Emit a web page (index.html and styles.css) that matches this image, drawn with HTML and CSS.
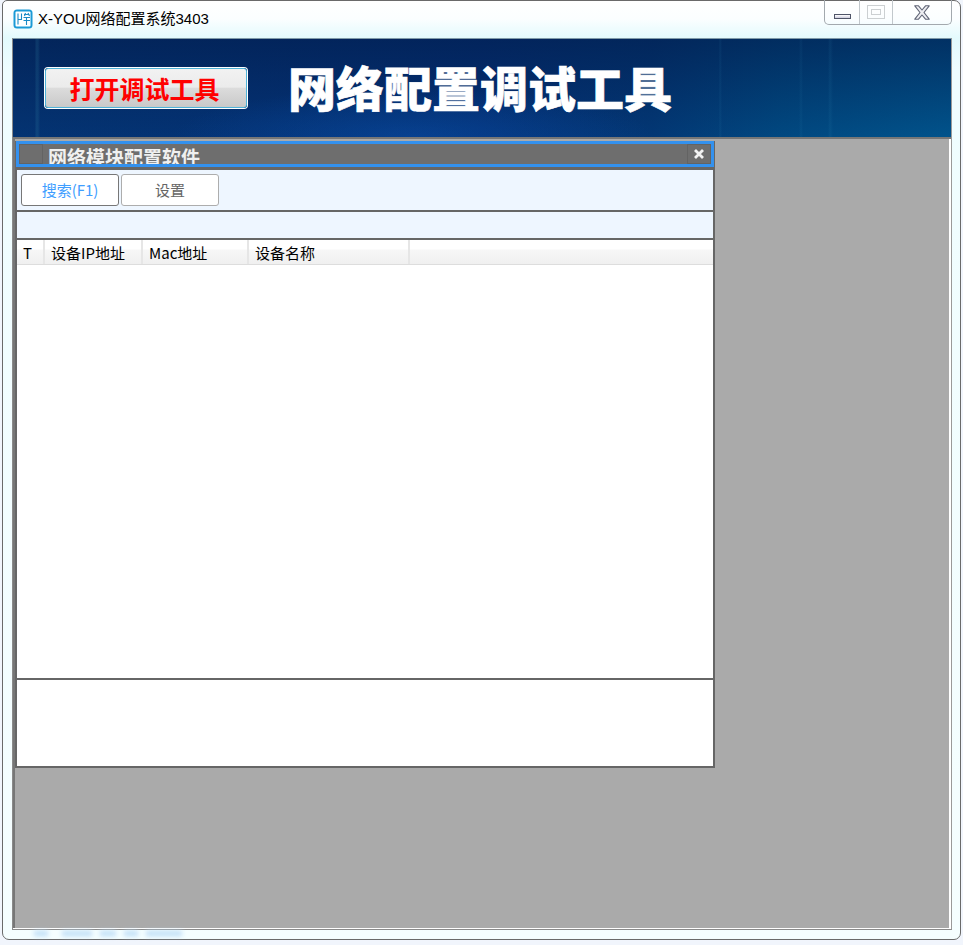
FILE: index.html
```html
<!DOCTYPE html>
<html lang="zh-CN">
<head>
<meta charset="utf-8">
<title>X-YOU网络配置系统3403</title>
<link rel="stylesheet" href="styles.css">
</head>
<body>
<div class="window">
  <div class="titlebar">
    <svg class="app-icon" width="20" height="20" viewBox="0 0 20 20">
      <rect x="0.5" y="0.5" width="19" height="19" rx="3.500" fill="#1b9ad6"/>
      <rect x="2.500" y="2.500" width="15" height="15" rx="1" fill="#fff"/>
      <path d="M5 4.500v11M8.500 4.500v6H5M11 5.500h5.500M12.500 4l-1 3M15 4l1.500 3M10.500 8.500h6.500M10.500 11.500h6.500M13.500 8.500v7.500" fill="none" stroke="#1b8ac6" stroke-width="1.100"/>
    </svg>
    <span class="title-text">X-YOU网络配置系统3403</span>
    <div class="controls">
      <div class="ctl ctl-min"><span class="min-glyph"></span></div>
      <div class="ctl ctl-max"><span class="max-glyph"><span class="max-inner"></span></span></div>
      <div class="ctl ctl-close">
        <svg width="16" height="15" viewBox="0 0 16 15"><path d="M0.800 0.800H4.500L8 5L11.500 0.800H15.200L10 7.500L15.200 14.200H11.500L8 10L4.500 14.200H0.800L6 7.500Z" fill="#eeeef2" stroke="#5f6475" stroke-width="1.100" stroke-linejoin="round"/></svg>
      </div>
    </div>
  </div>
  <div class="client">
    <div class="banner">
      <button class="open-btn">打开调试工具</button>
      <h1 class="banner-title">网络配置调试工具</h1>
    </div>
    <div class="workspace">
      <div class="panel">
        <div class="panel-title">
          <span class="panel-icon"></span>
          <span class="panel-name">网络模块配置软件</span>
          <span class="panel-close">
            <svg width="12" height="12" viewBox="0 0 12 12"><path d="M2 2L10 10M10 2L2 10" stroke="#f2f2f2" stroke-width="2.800"/></svg>
          </span>
        </div>
        <div class="toolbar">
          <button class="tool-btn tool-btn-active">搜索(F1)</button>
          <button class="tool-btn">设置</button>
        </div>
        <div class="strip"></div>
        <div class="table-head">
          <span class="col col-t">T</span>
          <span class="col col-ip">设备IP地址</span>
          <span class="col col-mac">Mac地址</span>
          <span class="col col-name">设备名称</span>
        </div>
        <div class="table-body"></div>
        <div class="log"></div>
      </div>
    </div>
  </div>
  <div class="glass-row">
    <span class="smear smear-a"></span>
    <span class="smear smear-b"></span>
    <span class="smear smear-c"></span>
    <span class="smear smear-d"></span>
    <span class="smear smear-e"></span>
  </div>
</div>
</body>
</html>
```
FILE: styles.css
```css
* { box-sizing: border-box; }
html, body { margin: 0; padding: 0; }
body {
  width: 963px;
  height: 945px;
  overflow: hidden;
  background: #f1f5fc;
  font-family: "Noto Sans CJK SC", "Noto Sans", sans-serif;
}
.window {
  width: 959px;
  height: 940px;
  margin-left: 2px;
  padding: 0 8px 0 9px;
  border: 1px solid #6a6a6a;
  border-radius: 5px 7px 7px 7px;
  background: linear-gradient(180deg, #fff 0, #fbfeff 18px, #e3fafd 37px, #effdff 70px, #f5feff 100%);
  display: flex;
  flex-direction: column;
}
.titlebar {
  height: 37px;
  flex: none;
  display: flex;
  align-items: flex-start;
}
.app-icon { margin: 8px 5px 0 1px; flex: none; }
.title-text {
  margin-top: 7px;
  font-family: "Liberation Sans", "Noto Sans CJK SC", sans-serif;
  font-size: 15px;
  line-height: 22px;
  color: #000;
}
.controls {
  margin-left: auto;
  margin-top: -1px;
  width: 128px;
  height: 25px;
  display: flex;
  border: 1px solid #a3a9ae;
  border-top: none;
  border-radius: 0 0 5px 5px;
}
.ctl { display: flex; align-items: center; justify-content: center; }
.ctl-min { width: 35px; border-right: 1px solid #c2c8cc; }
.ctl-max { width: 33px; border-right: 1px solid #c2c8cc; }
.ctl-close { flex: 1; }
.min-glyph {
  width: 17px;
  height: 5px;
  margin-top: 9px;
  border: 1px solid #4f5568;
  background: linear-gradient(180deg, #fff, #ccd);
}
.max-glyph {
  width: 18px;
  height: 14px;
  border: 1px solid #ccd0d2;
  display: flex;
  align-items: center;
  justify-content: center;
}
.max-inner { width: 10px; height: 6px; border: 1px solid #ccd0d2; }
.client {
  flex: none;
  height: 892px;
  border-left: 1px solid #8a8a8a;
  border-right: 1px solid #9a9a9a;
  border-bottom: 1px solid #8a8a8a;
  background: #fff;
  display: flex;
  flex-direction: column;
}
.banner {
  height: 101px;
  flex: none;
  border-top: 1px solid #7f9aa8;
  border-bottom: 2px solid #777;
  padding-left: 32px;
  display: flex;
  align-items: flex-start;
  background:
    linear-gradient(90deg, transparent 22px, rgba(60,150,180,.16) 23px, rgba(60,150,180,.16) 25px, transparent 27px),
    linear-gradient(90deg, transparent 706px, rgba(60,150,190,.1) 707px, transparent 709px),
    linear-gradient(90deg, transparent 786px, rgba(60,150,190,.08) 788px, transparent 790px),
    linear-gradient(90deg, transparent 815px, rgba(60,150,190,.1) 817px, transparent 820px),
    radial-gradient(ellipse 240px 50px at 400px 100%, rgba(10,80,170,.5), transparent),
    linear-gradient(180deg, rgba(2,30,80,.75) 0, rgba(3,40,100,.35) 100%),
    linear-gradient(90deg, #053a7a 0, #043680 50%, #03407e 68%, #005a90 82%, #006aa0 100%);
}
.open-btn {
  width: 202px;
  height: 40px;
  margin-top: 29px;
  padding: 0 3px 0 0;
  border: 1px solid #4fb3d9;
  box-shadow: 0 0 0 1px #fff;
  border-radius: 3px;
  background: linear-gradient(180deg, #f2f2f2 0, #ebebeb 48%, #dcdcdc 50%, #c9c9c9 100%);
  color: #f00;
  font-family: "Noto Sans CJK SC", sans-serif;
  font-size: 25px;
  font-weight: 700;
  line-height: 36px;
}
.banner-title {
  margin: 14px 0 0 41px;
  color: #fff;
  font-size: 48px;
  font-weight: 900;
  line-height: 66px;
  white-space: nowrap;
  -webkit-text-stroke: 0.6px #fff;
}
.workspace {
  flex: 1;
  margin-right: 2px;
  margin-bottom: 1px;
  border-left: 2px solid #777;
  background: #aaa;
  padding-top: 2px;
}
.panel {
  width: 700px;
  height: 627px;
  border: solid #666;
  border-width: 0 2px 2px;
  background: #fff;
  display: flex;
  flex-direction: column;
}
.panel-title {
  flex: none;
  height: 26px;
  margin: 0 -1px;
  border: 3px solid #3391ee;
  background: #6e6e6e;
  display: flex;
  align-items: stretch;
  overflow: hidden;
}
.panel-icon { width: 24px; flex: none; border: 1px solid #636363; }
.panel-name {
  margin-left: 5px;
  color: #f0f0f0;
  font-size: 19px;
  font-weight: 700;
  line-height: 25px;
  white-space: nowrap;
}
.panel-close {
  margin-left: auto;
  width: 24px;
  flex: none;
  border: 1px solid #636363;
  display: flex;
  align-items: center;
  justify-content: center;
}
.toolbar {
  flex: none;
  height: 45px;
  border-top: 3px solid #666;
  border-bottom: 2px solid #666;
  background: #eef6ff;
  padding: 4px 0 0 4px;
  display: flex;
  align-items: flex-start;
  gap: 2px;
}
.tool-btn {
  width: 98px;
  height: 32px;
  padding: 0 0 2px;
  border: 1px solid #adadad;
  border-radius: 3px;
  background: #fff;
  color: #666;
  font-family: "Noto Sans CJK SC", sans-serif;
  font-size: 15px;
}
.tool-btn-active { border-color: #777; color: #409eff; }
.strip {
  flex: none;
  height: 28px;
  border-bottom: 2px solid #666;
  background: #eef6ff;
}
.table-head {
  flex: none;
  height: 25px;
  display: flex;
  border-bottom: 1px solid #ddd;
  background: linear-gradient(180deg, #fff 0, #fff 9px, #f7f7f7 10px, #f0f0f0 100%);
  font-size: 15px;
  line-height: 26px;
  color: #000;
}
.col { padding-left: 6px; border-right: 2px solid #e6e6e6; white-space: nowrap; }
.col-t { width: 28px; }
.col-ip { width: 98px; }
.col-mac { width: 106px; }
.col-name { width: 161px; }
.table-body { flex: 1; background: #fff; }
.log {
  flex: none;
  height: 88px;
  border-top: 2px solid #666;
  background: #fff;
}
.glass-row {
  flex: none;
  height: 9px;
  margin-top: 1px;
  padding-left: 20px;
  display: flex;
  gap: 8px;
}
.smear { height: 5px; background: #bcdcf6; filter: blur(2.500px); }
.smear-a { width: 14px; margin-left: 2px; }
.smear-b { width: 30px; margin-left: 6px; }
.smear-c { width: 16px; }
.smear-d { width: 14px; }
.smear-e { width: 36px; }
```
